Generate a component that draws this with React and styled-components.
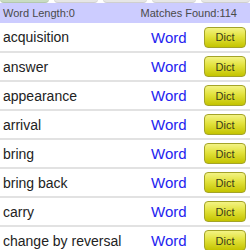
import React from 'react'
import styled, { createGlobalStyle } from 'styled-components'

const GlobalStyle = createGlobalStyle`
    html, body {
        margin: 0;
        padding: 0;
        background: #ffffff;
        font-family: "Liberation Sans", Arial, sans-serif;
        overflow: hidden;
    }
`

const Page = styled.div`
    width: 250px;
    height: 250px;
    overflow: hidden;
    background: #ffffff;
`

const TabStrip = styled.div`
    display: flex;
    gap: 5px;
    height: 3px;
    overflow: hidden;
    align-items: flex-end;
`

const Tab = styled.div`
    flex: 0 0 ${props => props.w}px;
    height: 20px;
    border-radius: 0 0 4px 4px;
    background: ${props => props.active ? '#c9dcc3' : '#e6e6e6'};
    border-bottom: 1px solid ${props => props.active ? '#b4c8ae' : '#cfcfcf'};
`

const StatusBar = styled.div`
    display: flex;
    justify-content: space-between;
    align-items: center;
    height: 20px;
    padding: 0 13px 0 3px;
    background: #ccccff;
    color: #4a4a4a;
    font-size: 11px;
`

const List = styled.div`
    display: flex;
    flex-direction: column;
`

const Row = styled.div`
    display: flex;
    align-items: center;
    height: 27px;
    border-bottom: 2px solid #e2e2e2;
    &:first-child {
        height: 28px;
    }
`

const Term = styled.div`
    flex: 1;
    padding-left: 3px;
    font-size: 14px;
    color: #222222;
    white-space: nowrap;
`

const WordLink = styled.div`
    width: 53px;
    font-size: 15px;
    color: #2424f0;
`

const DictButton = styled.div`
    display: flex;
    align-items: center;
    justify-content: center;
    width: 40px;
    height: 19px;
    margin-right: 4px;
    border: 1px solid #a3a328;
    border-radius: 4px;
    background: linear-gradient(to bottom, #f3f384 0%, #e2e23c 45%, #c4c400 100%);
    color: #3a3a1a;
    font-size: 11px;
`

const tabs = [
    { w: 49, active: true },
    { w: 44 },
    { w: 44 },
    { w: 44 },
    { w: 49 },
]

const words = [
    'acquisition',
    'answer',
    'appearance',
    'arrival',
    'bring',
    'bring back',
    'carry',
    'change by reversal',
]

const App = () => {
    return (
        <Page>
            <GlobalStyle />
            <TabStrip>
                {tabs.map((t, i) => <Tab key={i} w={t.w} active={t.active} />)}
            </TabStrip>
            <StatusBar>
                <span>Word Length:0</span>
                <span>Matches Found:114</span>
            </StatusBar>
            <List>
                {words.map(w => (
                    <Row key={w}>
                        <Term>{w}</Term>
                        <WordLink>Word</WordLink>
                        <DictButton>Dict</DictButton>
                    </Row>
                ))}
            </List>
        </Page>
    )
}

export default App
